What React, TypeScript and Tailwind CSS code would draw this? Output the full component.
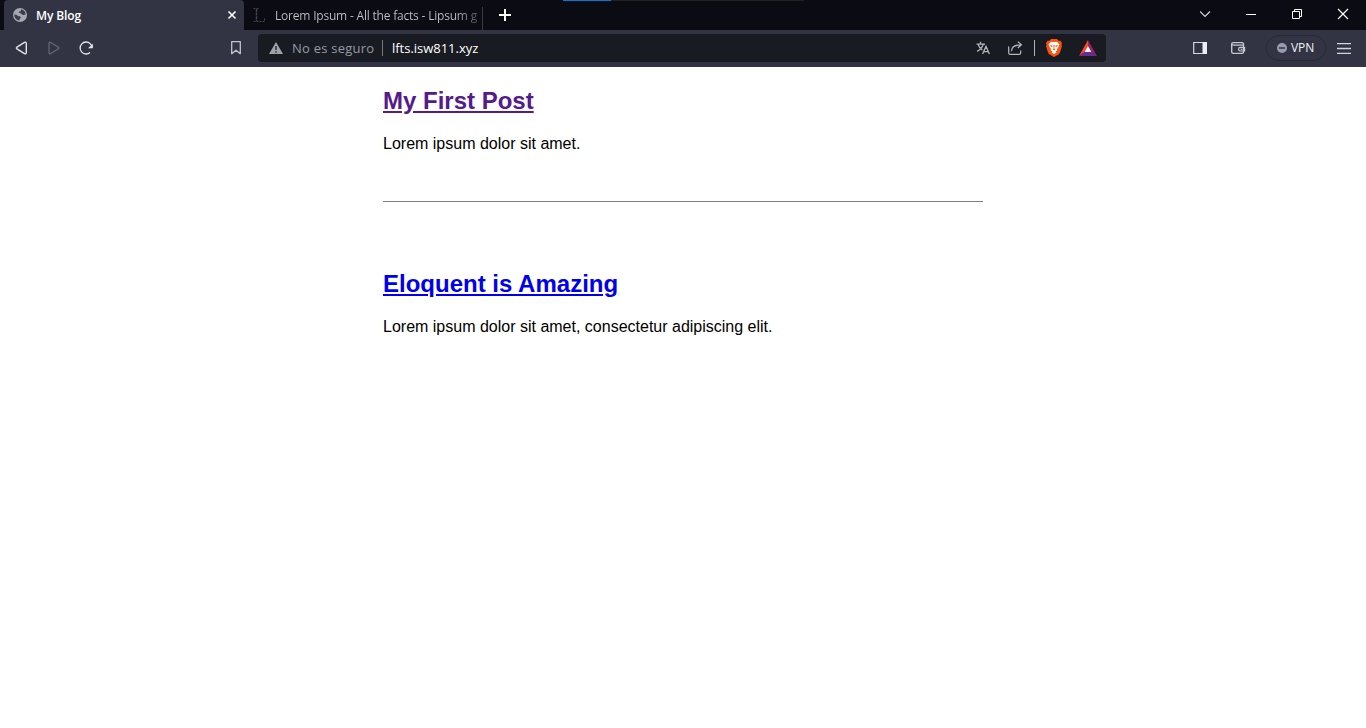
import React from "react";

const UI = "font-['Open_Sans','Noto_Sans',sans-serif]";

function Globe() {
  return (
    <svg className="ml-[9px] h-[14px] w-[14px] shrink-0" viewBox="0 0 14 14">
      <circle cx="7" cy="7" r="7" fill="#a4a8b1" />
      <path
        d="M8.2 1.3C7.5 1.9 8.3 2.6 7.7 3.2C7 3.8 6 3.4 5.7 4.2C5.5 5 6.6 5 7.4 5.2C8.6 5.5 8.7 6.5 9.6 6.8C10.7 7.1 11.9 6.6 12.6 6.4C12.6 3.8 10.8 1.8 8.2 1.3ZM1.3 6.6C1.2 9.6 3.4 12.4 6.4 12.6C6.6 11.7 6.2 11.1 7 10.5C7.8 9.9 8 9.2 7.3 8.6C6.4 7.9 5.6 8.5 4.7 7.7C3.9 7 2.6 6.6 1.3 6.6Z"
        fill="#3a3d4b"
      />
    </svg>
  );
}

function TabBar() {
  return (
    <div className="flex h-[30px] items-start bg-[#0b0b14] pl-1">
      <div className="flex h-[30px] w-[240px] items-center rounded-t-[4px] bg-[#323443]">
        <Globe />
        <span className="ml-[9px] w-[188px] whitespace-nowrap pt-px text-[12px] font-semibold leading-[29px] tracking-[-0.12px] text-white">My Blog</span>
        <svg className="h-4 w-4 shrink-0" viewBox="0 0 16 16" stroke="#fff" strokeWidth="1.7">
          <path d="M4.5 4.5L11.5 11.5M11.5 4.5L4.5 11.5" />
        </svg>
      </div>
      <div className="flex h-[30px] w-[239px] items-center">
        <svg className="ml-2 h-4 w-[14px] shrink-0" viewBox="0 0 14 16" fill="none" stroke="#45454b">
          <path d="M1.5 1.5H7M1.5 14.5H12.5V11" strokeDasharray="2 1" />
          <path d="M4.5 2V14" strokeWidth="1.4" strokeDasharray="3 .6" />
        </svg>
        <span className="ml-[9px] w-[204px] whitespace-nowrap bg-[linear-gradient(90deg,#c2c2c8_0_88%,#0b0b14_106%)] bg-clip-text pt-px text-[12px] leading-[29px] tracking-[-0.2px] text-transparent">
          Lorem Ipsum - All the facts - Lipsum g
        </span>
        <span className="ml-[3px] mt-[7px] h-[23px] w-px bg-[#3b3b43]" />
      </div>
      <svg className="ml-[14px] mt-[7px] h-4 w-4 shrink-0" viewBox="0 0 16 16" stroke="#fff" strokeWidth="2">
        <path d="M2 8H14M8 2V14" />
      </svg>
      <div className="ml-[50px] flex h-px w-[241px] bg-[#20201f]">
        <span className="h-px w-12 bg-[#0078d7]" />
      </div>
      <svg className="ml-auto mr-[12px] mt-[6px] h-4 w-[154px] shrink-0" viewBox="0 0 154 16" fill="none" stroke="#fff">
        <path d="M0 5.5L5 10.5L10 5.5" stroke="#d5d5d8" strokeWidth="1.2" />
        <path d="M46 8.5H56" />
        <path d="M92.5 5.5H99.5V12.5H92.5ZM94.5 5.5V3.5H101.5V10.5H99.5" />
        <path d="M138 3L148 13M148 3L138 13" strokeWidth="1.2" />
      </svg>
    </div>
  );
}

function Navigation() {
  return (
    <svg className="h-[37px] w-[258px] shrink-0" viewBox="0 0 258 37" fill="none" stroke="#e4e5e8" strokeWidth="1.4" strokeLinejoin="round">
      <path d="M16.9 17.2Q15.9 18 16.9 18.8L24.5 23.6Q26.3 24.4 26.3 22.6V13.4Q26.3 11.6 24.5 12.4Z" />
      <path d="M58.4 17.2Q59.4 18 58.4 18.8L50.8 23.6Q49 24.4 49 22.6V13.4Q49 11.6 50.8 12.4Z" stroke="#686a77" strokeWidth="1.2" />
      <path d="M90 13.4A6 6 0 1 0 90 22.6" strokeWidth="1.3" />
      <path d="M90 13.4Q91.4 14.6 91.8 16.2" strokeWidth="1.3" />
      <path d="M92.6 14.2V18H88.6Z" fill="#e4e5e8" strokeWidth=".6" />
      <path d="M231.7 11.7H240.3V23.7L236 20.2L231.7 23.7Z" stroke="#c2c4ca" strokeWidth="1.3" />
    </svg>
  );
}

function BraveLogo() {
  return (
    <svg className="ml-[11px] h-[18px] w-4 shrink-0" viewBox="0 0 16 18">
      <path d="M5 0H11L12.7 1.8L14.4 1.7L16 4L15.4 5.9L16 7.1L14 13.6Q13.6 14.8 12.5 15.6L8 18L3.5 15.6Q2.4 14.8 2 13.6L0 7.1L.6 5.9L0 4L1.6 1.7L3.3 1.8Z" fill="#fb5109" />
      <path d="M5.2 2.7L8 3.1L10.8 2.7L13.4 5.3L12.4 8.1L11.1 10L11.2 11.7L9.3 12.2L10.5 13.3L8 15.2L5.5 13.3L6.7 12.2L4.8 11.7L4.9 10L3.6 8.1L2.6 5.3Z" fill="#fff" />
      <path d="M4.2 6L6.8 6.7L6.1 8.1L4.8 7.4ZM11.8 6L9.2 6.7L9.9 8.1L11.2 7.4ZM7.4 6H8.6L8.3 9.4L9.4 10.4L8 11.3L6.6 10.4L7.7 9.4Z" fill="#fb5109" />
    </svg>
  );
}

function AddressBar() {
  return (
    <div className="mt-1 flex h-7 w-[848px] items-center rounded-[4px] bg-[#191b22]">
      <svg className="ml-[11px] h-[14px] w-[14px] shrink-0" viewBox="0 0 14 14">
        <path d="M7 1L14 13H0Z" fill="#a0a2a9" />
        <path d="M7 5V9M7 10.2V11.7" stroke="#191b22" strokeWidth="1.3" />
      </svg>
      <span className="ml-[9px] w-[90px] whitespace-nowrap pt-px text-[13px] tracking-[0.23px] text-[#969aa3]">No es seguro</span>
      <span className="h-4 w-px bg-[#74777e]" />
      <span className="ml-[9px] whitespace-nowrap pt-px text-[13px] tracking-[-0.02px] text-white">lfts.isw811.xyz</span>
      <svg className="ml-auto h-[18px] w-[60px] shrink-0" viewBox="0 0 60 18" fill="none" stroke="#b4b5b9" strokeWidth="1.25">
        <path d="M6.5 2.8V5M2.5 5.2H11M9.1 5.5C8.2 8.5 6.1 10.8 3.1 12.4M4.3 5.8C5.2 8.4 6.5 9.9 8.5 11.2M8.6 15L12 7.4L15.4 15M9.8 12.5H14.2" />
        <path d="M34.7 7.5V13.7Q34.7 15.3 36.3 15.3H45Q46.7 15.3 46.7 13.7V11.5M37.4 12.3C37.6 8 40 5.8 46.9 5.8M43.8 2.6L47.4 5.8L43.8 9" />
      </svg>
      <span className="h-4 w-px bg-[#b3b4b8]" />
      <BraveLogo />
      <svg className="ml-[17px] mr-[9px] h-4 w-[18px] shrink-0" viewBox="0 0 18 16">
        <path d="M9 0L0 16L9 10Z" fill="#ff4724" />
        <path d="M9 0L18 16L9 10Z" fill="#9e1f63" />
        <path d="M0 16H18L9 9Z" fill="#662d91" />
        <path d="M9 6L12.4 12H5.6Z" fill="#fff" />
      </svg>
    </div>
  );
}

function Toolbar() {
  return (
    <div className="flex h-[37px] items-start bg-[#323443]">
      <Navigation />
      <AddressBar />
      <svg className="ml-[87px] mt-[10px] h-4 w-[53px] shrink-0" viewBox="0 0 53 16" fill="none" stroke="#d7d8dc" strokeWidth="1.2">
        <path d="M.7 2.5H13.3V13.5H.7Z" />
        <path d="M9.5 2H14V14H9.5Z" fill="#eeeef1" stroke="none" />
        <g stroke="#c6c7cc" strokeWidth="1.4">
          <path d="M50.5 5V4Q50.5 2.6 49.1 2.6H40.2Q38.7 2.6 38.7 4V11.8Q38.7 13.4 40.2 13.4H49.1Q50.5 13.4 50.5 12V11" />
          <path d="M39 4.3Q39.6 5.2 41 5.2H50.5V11H47.2Q45.6 11 45.6 9.6V8.8Q45.6 7.4 47.2 7.4H51.6V11H50.5" strokeWidth="1.2" />
        </g>
        <path d="M47.6 9.2H49.4" />
      </svg>
      <div className="ml-5 mt-[5px] flex h-[26px] w-[60px] items-center rounded-full border border-[#272936]">
        <svg className="ml-[10px] h-[10px] w-[10px] shrink-0" viewBox="0 0 10 10">
          <circle cx="5" cy="5" r="5" fill="#989baf" />
          <path d="M2 5H8" stroke="#323443" strokeWidth="1.5" />
        </svg>
        <span className="ml-1 text-[12px] tracking-[-0.1px] text-[#f1f1f4]">VPN</span>
      </div>
      <svg className="ml-[11px] mt-[10px] h-4 w-[14px] shrink-0" viewBox="0 0 14 16" stroke="#d3d4d9" strokeWidth="1.4">
        <path d="M0 3.6H14M0 8.5H14M0 13.4H14" />
      </svg>
    </div>
  );
}

function Post({ title, text, visited }: { title: string; text: string; visited?: boolean }) {
  return (
    <article>
      <h2 className="text-[24px] font-bold leading-[27px]">
        <a className={visited ? "text-[#551a8b] underline" : "text-[#0000ee] underline"}>{title}</a>
      </h2>
      <p className="mt-[21px] text-[16px] leading-[18px] text-black">{text}</p>
    </article>
  );
}

export default function App() {
  return (
    <div className="h-[728px] w-[1366px] overflow-hidden bg-white">
      <header className={UI}>
        <TabBar />
        <Toolbar />
      </header>
      <main className="mx-auto w-[600px] pt-5 font-['Liberation_Sans',Arial,sans-serif]">
        <Post title="My First Post" text="Lorem ipsum dolor sit amet." visited />
        <hr className="mb-[68px] mt-12 border-t border-[#808080]" />
        <Post title="Eloquent is Amazing" text="Lorem ipsum dolor sit amet, consectetur adipiscing elit." />
      </main>
    </div>
  );
}
